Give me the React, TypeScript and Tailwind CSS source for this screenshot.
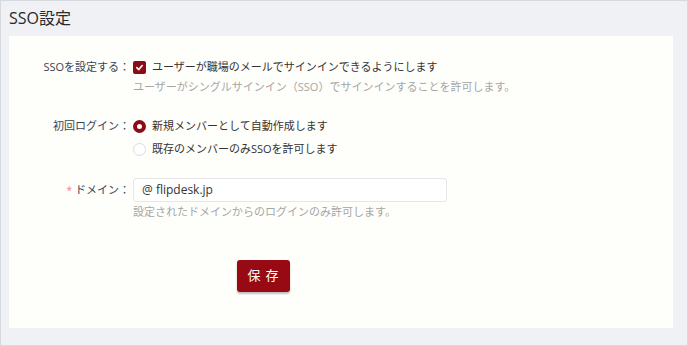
export default function App() {
  return (
    <div
      className="flex h-[346px] w-[688px] flex-col border border-[#d6d9de] bg-[#eff1f4] pl-2 text-[11px] text-[#3a4453]"
      style={{ fontFamily: '"Open Sans", "Noto Sans CJK JP", sans-serif' }}
    >
      <div className="flex h-[35px] items-center pb-[1px] text-[16px] text-[#2a2a2a]">SSO設定</div>
      <div className="h-[292px] w-[664px] bg-[#fefefb] pt-[21px]">
        <div className="grid grid-cols-[121px_1fr] gap-x-[3px]">
          {/* SSO setting */}
          <div className="flex h-5 items-center justify-end">SSOを設定する：</div>
          <div className="flex flex-col">
            <label className="flex h-5 items-center gap-[6px] text-[#333]">
              <span className="flex h-[13px] w-[13px] items-center justify-center rounded-[2px] bg-[#8c0b17]">
                <svg width="9" height="9" viewBox="0 0 10 10">
                  <path d="M2 5.2 L4.2 7.3 L8 2.8" fill="none" stroke="white" strokeWidth="1.8" strokeLinecap="round" strokeLinejoin="round" />
                </svg>
              </span>
              ユーザーが職場のメールでサインインできるようにします
            </label>
            <div className="flex h-5 items-center pt-[1px] text-[#a6a6a6]">ユーザーがシングルサインイン（SSO）でサインインすることを許可します。</div>
          </div>

          {/* first login */}
          <div className="mt-[19px] flex h-5 items-center justify-end">初回ログイン：</div>
          <div className="mt-[19px] flex flex-col gap-[3px]">
            <label className="flex h-5 items-center gap-[6px] text-[#333]">
              <span className="h-[13px] w-[13px] rounded-full border-[4px] border-[#8c0b17] bg-white" />
              新規メンバーとして自動作成します
            </label>
            <label className="flex h-5 items-center gap-[6px] text-[#333]">
              <span className="h-[13px] w-[13px] rounded-full border border-[#dcdcdc] bg-white" />
              既存のメンバーのみSSOを許可します
            </label>
          </div>

          {/* domain */}
          <div className="mt-[19px] flex h-[24px] items-center justify-end">
            <span className="mr-[3px] text-[10px] text-[#f08080]">*</span>ドメイン：
          </div>
          <div className="mt-[19px] flex flex-col">
            <div className="flex h-[24px] w-[314px] items-center rounded-[3px] border border-[#e6e6e6] bg-white px-2 text-[12px] text-[#333]">
              @ flipdesk.jp
            </div>
            <div className="flex h-5 items-center text-[#a6a6a6]">設定されたドメインからのログインのみ許可します。</div>
          </div>
        </div>

        <div className="mt-[38px] pl-[228px]">
          <button className="h-[32px] w-[53px] rounded-[3px] bg-[#970a13] pl-[4px] text-[13px] tracking-[5px] text-white shadow-[0_2px_2px_rgba(0,0,0,0.25)]">
            保存
          </button>
        </div>
      </div>
    </div>
  );
}
